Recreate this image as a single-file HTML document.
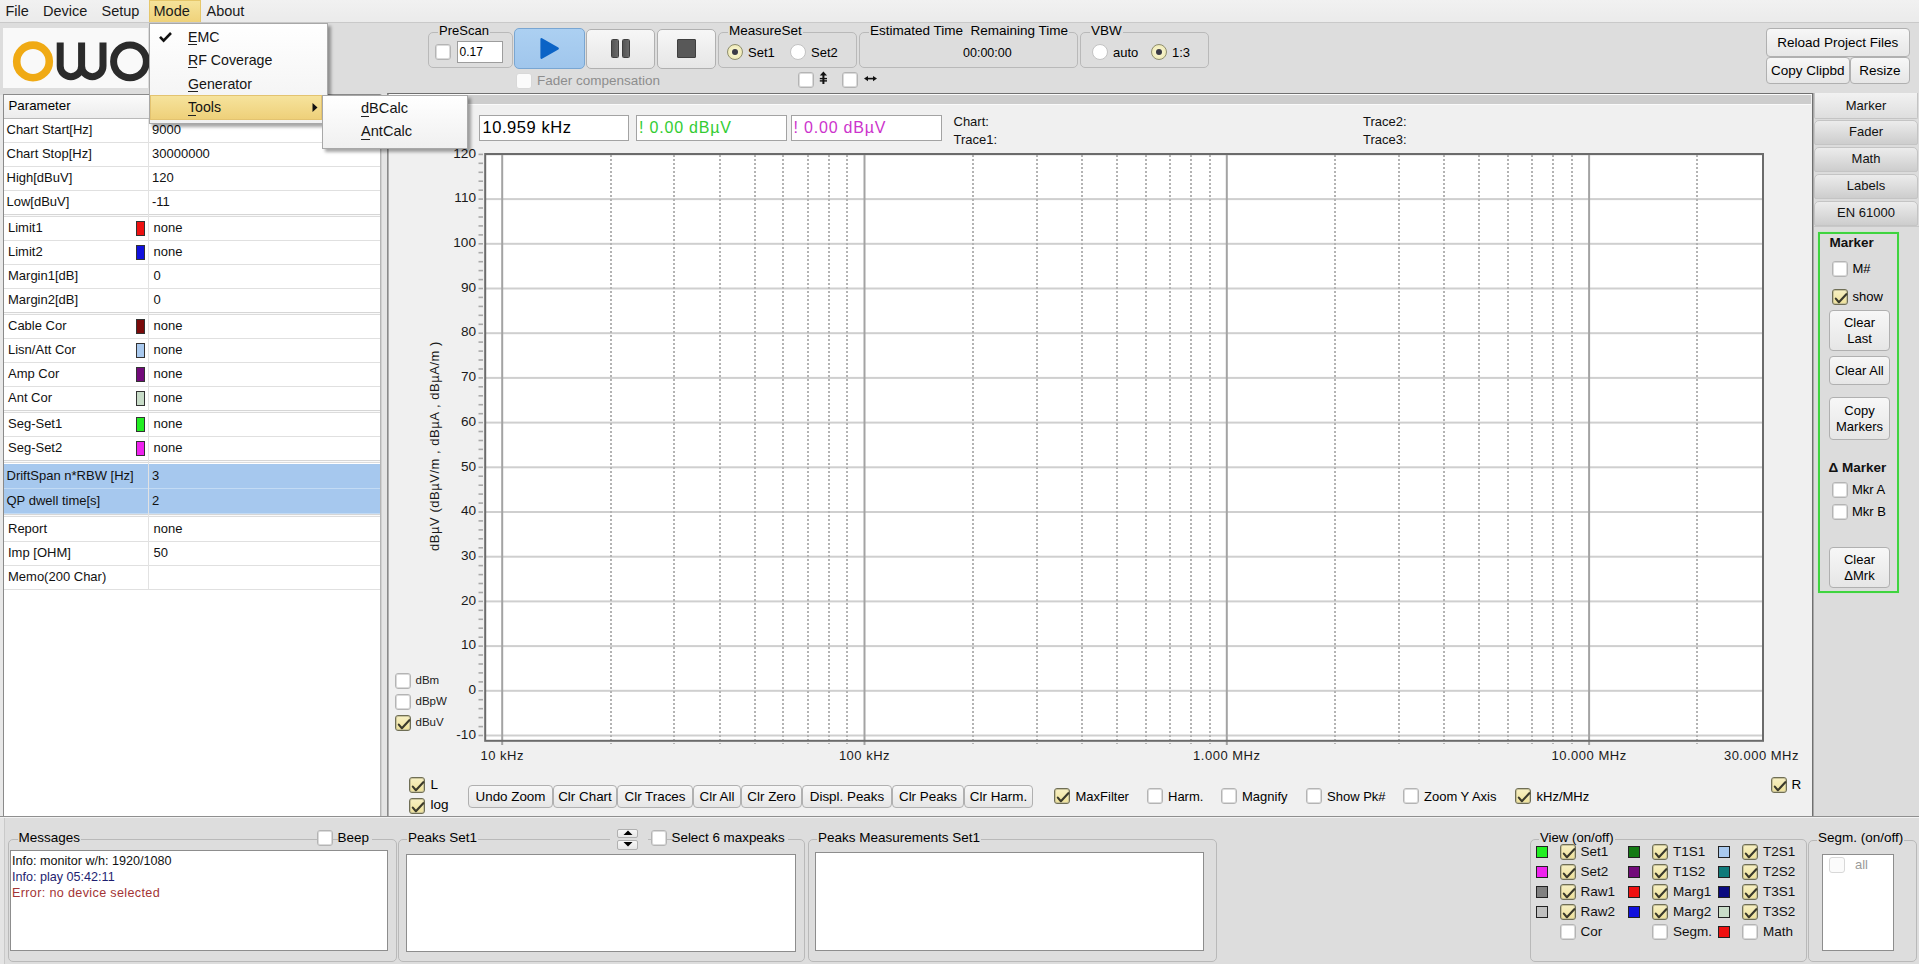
<!DOCTYPE html><html><head><meta charset="utf-8"><style>
*{margin:0;padding:0;box-sizing:border-box}
html,body{width:1919px;height:964px;overflow:hidden;background:#dddddd;font-family:"Liberation Sans", sans-serif}
.t{position:absolute;white-space:pre;font-family:"Liberation Sans", sans-serif}
.b{position:absolute}
.cb{position:absolute;border:1px solid #b4b4b4;border-radius:3px;background:#fff;box-shadow:0 0 0 1px #dadada inset}
.cb.on{border:1px solid #6f6e55;background:linear-gradient(#f7f0c4,#efe29a);box-shadow:0 0 0 1px #c9c39a inset;width:16px;height:16px}
.cb.dis{border-color:#d8d8d8;box-shadow:none;background:#fbfbfb}
.rd{position:absolute;width:16px;height:16px;border-radius:50%;border:1px solid #c3c3c3;background:#fff}
.rd.on{border:1px solid #8f8e6e;background:radial-gradient(circle,#f6f2c8 40%,#e8e2a8 100%)}
.rd .dot{position:absolute;left:4px;top:4px;width:6px;height:6px;border-radius:50%;background:#3a3a46}
.btn{position:absolute;border:1px solid #b0b0b0;border-radius:4px;background:linear-gradient(#f7f7f7,#e6e6e6)}
.grp{position:absolute;border:1px solid #b9b9b9;border-radius:5px}
</style></head><body>
<div class="b" style="left:0px;top:0px;width:1919px;height:23px;background:linear-gradient(#f1f1f1,#ebebeb);border-bottom:1px solid #c9c9c9"></div>
<div class="b" style="left:149px;top:0px;width:52px;height:22px;background:linear-gradient(#f6e39a,#efd27a);border:1px solid #e6c76a;border-bottom:none"></div>
<div class="t" style="left:5.5px;top:3.8px;font-size:14.5px;line-height:14.5px;color:#1a1a1a;">File</div>
<div class="t" style="left:43px;top:3.8px;font-size:14.5px;line-height:14.5px;color:#1a1a1a;">Device</div>
<div class="t" style="left:101.5px;top:3.8px;font-size:14.5px;line-height:14.5px;color:#1a1a1a;">Setup</div>
<div class="t" style="left:153.5px;top:3.8px;font-size:14.5px;line-height:14.5px;color:#1a1a1a;">Mode</div>
<div class="t" style="left:206.5px;top:3.8px;font-size:14.5px;line-height:14.5px;color:#1a1a1a;">About</div>
<div class="b" style="left:0px;top:23px;width:1919px;height:70px;background:#dddddd"></div>
<div class="b" style="left:3px;top:28px;width:145px;height:60px;background:#f9f9f9"></div>
<svg class="b" style="left:0;top:22px" width="160" height="70">
<circle cx="33" cy="39.4" r="16.3" stroke="#f0aa14" stroke-width="7.6" fill="none"/>
<path d="M60.2 20.4 V44 a10.7 10.7 0 0 0 21.4 0 V20.4 M81.6 44 a10.7 10.7 0 0 0 21.4 0 V20.4" stroke="#2b2b2b" stroke-width="7" fill="none"/>
<circle cx="130" cy="39.4" r="16.4" stroke="#2b2b2b" stroke-width="7" fill="none"/>
</svg>
<div class="grp" style="left:428px;top:32px;width:85px;height:36px"></div>
<div class="t" style="left:439px;top:24.0px;font-size:13px;line-height:13px;color:#000;background:#dddddd;padding:0 1px;margin-left:-1px;">PreScan</div>
<div class="cb" style="left:435px;top:44px;width:16px;height:16px"></div>
<div class="b" style="left:457px;top:41px;width:46px;height:22px;background:#fff;border:1px solid #9d9d9d"></div>
<div class="t" style="left:459.5px;top:46.0px;font-size:12px;line-height:12px;color:#000;">0.17</div>
<div class="b" style="left:514px;top:28px;width:71px;height:41px;border:1px solid #79a6d2;border-radius:5px;background:linear-gradient(#acd0f2,#a0c6ec)"></div>
<svg class="b" style="left:514px;top:28px" width="71" height="41"><path d="M27.5 11.2 L43.8 20.5 L27.5 29.8 Z" fill="#0b63c6" stroke="#0b63c6" stroke-width="2.2" stroke-linejoin="round"/></svg>
<div class="btn" style="left:586px;top:28.5px;width:69px;height:40px;border-radius:5px"></div>
<div class="b" style="left:611px;top:39px;width:7.5px;height:18.5px;background:linear-gradient(90deg,#555,#6a6a6a);border-radius:1.5px;border:1px solid #3f3f3f"></div>
<div class="b" style="left:622px;top:39px;width:8px;height:18.5px;background:linear-gradient(90deg,#555,#6a6a6a);border-radius:1.5px;border:1px solid #3f3f3f"></div>
<div class="btn" style="left:657px;top:28.5px;width:59px;height:40px;border-radius:5px"></div>
<div class="b" style="left:677px;top:39px;width:19px;height:18.5px;background:#585858;border:1px solid #3f3f3f;border-radius:1px"></div>
<div class="cb dis" style="left:516px;top:73px;width:16px;height:16px"></div>
<div class="t" style="left:537px;top:73.8px;font-size:13.5px;line-height:13.5px;color:#8d8d8d;">Fader compensation</div>
<div class="grp" style="left:718px;top:32px;width:139px;height:36px"></div>
<div class="t" style="left:729px;top:23.8px;font-size:13.5px;line-height:13.5px;color:#000;background:#dddddd;padding:0 1px;margin-left:-1px;">MeasureSet</div>
<div class="rd on" style="left:727px;top:44px"><div class="dot"></div></div>
<div class="t" style="left:748px;top:45.5px;font-size:13px;line-height:13px;color:#000;">Set1</div>
<div class="rd" style="left:790px;top:44px"></div>
<div class="t" style="left:811px;top:45.5px;font-size:13px;line-height:13px;color:#000;">Set2</div>
<div class="cb" style="left:797.5px;top:71.5px;width:16px;height:16px"></div>
<svg class="b" style="left:0;top:0" width="900" height="95"><path d="M823.4 71.6 L827 75.6 H819.8 Z" fill="#111"/><rect x="822.4" y="75" width="2" height="9" fill="#111"/><rect x="819.8" y="77.9" width="7.2" height="1.4" fill="#111"/><rect x="819.8" y="80.2" width="7.2" height="1.4" fill="#111"/></svg>
<div class="cb" style="left:842px;top:71.5px;width:16px;height:16px"></div>
<svg class="b" style="left:0;top:0" width="900" height="95"><path d="M864 78.6 L868 75.9 V81.3 Z M877 78.6 L873 75.9 V81.3 Z" fill="#111"/><rect x="867" y="77.8" width="7" height="1.6" fill="#111"/></svg>
<div class="grp" style="left:859px;top:32px;width:219px;height:36px"></div>
<div class="t" style="left:870px;top:23.8px;font-size:13.5px;line-height:13.5px;color:#000;background:#dddddd;padding:0 1px;margin-left:-1px;">Estimated Time  Remaining Time</div>
<div class="t" style="left:963px;top:46.8px;font-size:12.5px;line-height:12.5px;color:#000;">00:00:00</div>
<div class="grp" style="left:1080px;top:32px;width:129px;height:36px"></div>
<div class="t" style="left:1091px;top:23.8px;font-size:13.5px;line-height:13.5px;color:#000;background:#dddddd;padding:0 1px;margin-left:-1px;">VBW</div>
<div class="rd" style="left:1092px;top:44px"></div>
<div class="t" style="left:1113px;top:46.0px;font-size:13px;line-height:13px;color:#000;">auto</div>
<div class="rd on" style="left:1151px;top:44px"><div class="dot"></div></div>
<div class="t" style="left:1172px;top:46.0px;font-size:13px;line-height:13px;color:#000;">1:3</div>
<div class="btn" style="left:1765.5px;top:27.5px;width:144.5px;height:29.5px;"></div>
<div class="t" style="left:1537.75px;width:600px;text-align:center;top:35.5px;font-size:13.5px;line-height:13.5px;color:#000;">Reload Project Files</div>
<div class="btn" style="left:1765.5px;top:57px;width:84.5px;height:27px;"></div>
<div class="t" style="left:1507.75px;width:600px;text-align:center;top:63.8px;font-size:13.5px;line-height:13.5px;color:#000;">Copy Clipbd</div>
<div class="btn" style="left:1850px;top:57px;width:60px;height:27px;"></div>
<div class="t" style="left:1580.0px;width:600px;text-align:center;top:63.8px;font-size:13.5px;line-height:13.5px;color:#000;">Resize</div>
<div class="b" style="left:0px;top:95px;width:388px;height:723px;background:#e8e8e8"></div>
<div class="b" style="left:3px;top:94px;width:378px;height:723px;background:#fff;border:1px solid #8a8a8a;border-right:1px solid #b5b5b5"></div>
<div class="b" style="left:381px;top:94px;width:7px;height:723px;background:#e4e4e4;border-left:1px solid #d0d0d0"></div>
<div class="b" style="left:4px;top:95px;width:376px;height:24px;background:linear-gradient(#fbfbfb,#ececec);border-bottom:1px solid #b9b9b9"></div>
<div class="t" style="left:8.5px;top:98.5px;font-size:13.3px;line-height:13.3px;color:#000;">Parameter</div>
<div class="b" style="left:4px;top:118px;width:376px;height:25px;border-bottom:1px solid #e0e0e0"></div>
<div class="t" style="left:6.5px;top:122.5px;font-size:13px;line-height:13px;color:#111;">Chart Start[Hz]</div>
<div class="t" style="left:152px;top:122.5px;font-size:13px;line-height:13px;color:#111;">9000</div>
<div class="b" style="left:4px;top:142px;width:376px;height:25px;border-bottom:1px solid #e0e0e0"></div>
<div class="t" style="left:6.5px;top:146.5px;font-size:13px;line-height:13px;color:#111;">Chart Stop[Hz]</div>
<div class="t" style="left:152px;top:146.5px;font-size:13px;line-height:13px;color:#111;">30000000</div>
<div class="b" style="left:4px;top:166px;width:376px;height:25px;border-bottom:1px solid #e0e0e0"></div>
<div class="t" style="left:6.5px;top:170.5px;font-size:13px;line-height:13px;color:#111;">High[dBuV]</div>
<div class="t" style="left:152px;top:170.5px;font-size:13px;line-height:13px;color:#111;">120</div>
<div class="b" style="left:4px;top:190px;width:376px;height:25px;border-bottom:1px solid #e0e0e0"></div>
<div class="t" style="left:6.5px;top:194.5px;font-size:13px;line-height:13px;color:#111;">Low[dBuV]</div>
<div class="t" style="left:152px;top:194.5px;font-size:13px;line-height:13px;color:#111;">-11</div>
<div class="b" style="left:4px;top:214px;width:376px;height:3px;background:#fafafa;border-top:1px solid #d6d6d6;border-bottom:1px solid #dcdcdc"></div>
<div class="b" style="left:4px;top:216px;width:376px;height:25px;border-bottom:1px solid #e0e0e0"></div>
<div class="t" style="left:8px;top:220.5px;font-size:13px;line-height:13px;color:#111;">Limit1</div>
<div class="b" style="left:136px;top:221px;width:9px;height:15px;background:#ee1111;border:1px solid #333"></div>
<div class="t" style="left:153.5px;top:220.5px;font-size:13px;line-height:13px;color:#111;">none</div>
<div class="b" style="left:4px;top:240px;width:376px;height:25px;border-bottom:1px solid #e0e0e0"></div>
<div class="t" style="left:8px;top:244.5px;font-size:13px;line-height:13px;color:#111;">Limit2</div>
<div class="b" style="left:136px;top:245px;width:9px;height:15px;background:#1111dd;border:1px solid #333"></div>
<div class="t" style="left:153.5px;top:244.5px;font-size:13px;line-height:13px;color:#111;">none</div>
<div class="b" style="left:4px;top:264px;width:376px;height:25px;border-bottom:1px solid #e0e0e0"></div>
<div class="t" style="left:8px;top:268.5px;font-size:13px;line-height:13px;color:#111;">Margin1[dB]</div>
<div class="t" style="left:153.5px;top:268.5px;font-size:13px;line-height:13px;color:#111;">0</div>
<div class="b" style="left:4px;top:288px;width:376px;height:25px;border-bottom:1px solid #e0e0e0"></div>
<div class="t" style="left:8px;top:292.5px;font-size:13px;line-height:13px;color:#111;">Margin2[dB]</div>
<div class="t" style="left:153.5px;top:292.5px;font-size:13px;line-height:13px;color:#111;">0</div>
<div class="b" style="left:4px;top:312px;width:376px;height:3px;background:#fafafa;border-top:1px solid #d6d6d6;border-bottom:1px solid #dcdcdc"></div>
<div class="b" style="left:4px;top:314px;width:376px;height:25px;border-bottom:1px solid #e0e0e0"></div>
<div class="t" style="left:8px;top:318.5px;font-size:13px;line-height:13px;color:#111;">Cable Cor</div>
<div class="b" style="left:136px;top:319px;width:9px;height:15px;background:#7a0a0a;border:1px solid #333"></div>
<div class="t" style="left:153.5px;top:318.5px;font-size:13px;line-height:13px;color:#111;">none</div>
<div class="b" style="left:4px;top:338px;width:376px;height:25px;border-bottom:1px solid #e0e0e0"></div>
<div class="t" style="left:8px;top:342.5px;font-size:13px;line-height:13px;color:#111;">Lisn/Att Cor</div>
<div class="b" style="left:136px;top:343px;width:9px;height:15px;background:#a9c9ee;border:1px solid #333"></div>
<div class="t" style="left:153.5px;top:342.5px;font-size:13px;line-height:13px;color:#111;">none</div>
<div class="b" style="left:4px;top:362px;width:376px;height:25px;border-bottom:1px solid #e0e0e0"></div>
<div class="t" style="left:8px;top:366.5px;font-size:13px;line-height:13px;color:#111;">Amp Cor</div>
<div class="b" style="left:136px;top:367px;width:9px;height:15px;background:#720a7a;border:1px solid #333"></div>
<div class="t" style="left:153.5px;top:366.5px;font-size:13px;line-height:13px;color:#111;">none</div>
<div class="b" style="left:4px;top:386px;width:376px;height:25px;border-bottom:1px solid #e0e0e0"></div>
<div class="t" style="left:8px;top:390.5px;font-size:13px;line-height:13px;color:#111;">Ant Cor</div>
<div class="b" style="left:136px;top:391px;width:9px;height:15px;background:#c8dcc8;border:1px solid #333"></div>
<div class="t" style="left:153.5px;top:390.5px;font-size:13px;line-height:13px;color:#111;">none</div>
<div class="b" style="left:4px;top:410px;width:376px;height:3px;background:#fafafa;border-top:1px solid #d6d6d6;border-bottom:1px solid #dcdcdc"></div>
<div class="b" style="left:4px;top:412px;width:376px;height:25px;border-bottom:1px solid #e0e0e0"></div>
<div class="t" style="left:8px;top:416.5px;font-size:13px;line-height:13px;color:#111;">Seg-Set1</div>
<div class="b" style="left:136px;top:417px;width:9px;height:15px;background:#22ee22;border:1px solid #333"></div>
<div class="t" style="left:153.5px;top:416.5px;font-size:13px;line-height:13px;color:#111;">none</div>
<div class="b" style="left:4px;top:436px;width:376px;height:25px;border-bottom:1px solid #e0e0e0"></div>
<div class="t" style="left:8px;top:440.5px;font-size:13px;line-height:13px;color:#111;">Seg-Set2</div>
<div class="b" style="left:136px;top:441px;width:9px;height:15px;background:#ee22ee;border:1px solid #333"></div>
<div class="t" style="left:153.5px;top:440.5px;font-size:13px;line-height:13px;color:#111;">none</div>
<div class="b" style="left:4px;top:460px;width:376px;height:3px;background:#fafafa;border-top:1px solid #d6d6d6;border-bottom:1px solid #dcdcdc"></div>
<div class="b" style="left:4px;top:464px;width:376px;height:25px;background:#a6c8ee;border-bottom:1px solid #c3dbf4"></div>
<div class="t" style="left:6.5px;top:468.5px;font-size:13px;line-height:13px;color:#111;">DriftSpan n*RBW [Hz]</div>
<div class="t" style="left:152px;top:468.5px;font-size:13px;line-height:13px;color:#111;">3</div>
<div class="b" style="left:4px;top:489px;width:376px;height:25px;background:#a6c8ee;border-bottom:1px solid #c3dbf4"></div>
<div class="t" style="left:6.5px;top:493.5px;font-size:13px;line-height:13px;color:#111;">QP dwell time[s]</div>
<div class="t" style="left:152px;top:493.5px;font-size:13px;line-height:13px;color:#111;">2</div>
<div class="b" style="left:4px;top:514px;width:376px;height:3px;background:#fafafa;border-top:1px solid #d6d6d6;border-bottom:1px solid #dcdcdc"></div>
<div class="b" style="left:4px;top:517px;width:376px;height:25px;border-bottom:1px solid #e0e0e0"></div>
<div class="t" style="left:8px;top:521.5px;font-size:13px;line-height:13px;color:#111;">Report</div>
<div class="t" style="left:153.5px;top:521.5px;font-size:13px;line-height:13px;color:#111;">none</div>
<div class="b" style="left:4px;top:541px;width:376px;height:25px;border-bottom:1px solid #e0e0e0"></div>
<div class="t" style="left:8px;top:545.5px;font-size:13px;line-height:13px;color:#111;">Imp [OHM]</div>
<div class="t" style="left:153.5px;top:545.5px;font-size:13px;line-height:13px;color:#111;">50</div>
<div class="b" style="left:4px;top:565px;width:376px;height:25px;border-bottom:1px solid #e0e0e0"></div>
<div class="t" style="left:8px;top:569.5px;font-size:13px;line-height:13px;color:#111;">Memo(200 Char)</div>
<div class="b" style="left:148px;top:119px;width:1px;height:470px;background:#e2e2e2"></div>
<div class="b" style="left:387px;top:93px;width:1426px;height:724px;background:#f0f0f0;border-left:1px solid #8a8a8a;border-top:1px solid #707070;border-bottom:1px solid #9a9a9a;border-right:1px solid #707070"></div>
<div class="b" style="left:388px;top:94px;width:1424px;height:1px;background:#fbfbfb"></div>
<div class="b" style="left:388px;top:94px;width:1px;height:722px;background:#b0b0b0"></div>
<div class="b" style="left:389px;top:95px;width:1422px;height:10px;background:#cdcdcd;border-bottom:1px solid #fafafa"></div>
<div class="b" style="left:479px;top:115px;width:150px;height:26px;background:#fff;border:1px solid #a3a3a3"></div>
<div class="t" style="left:482.5px;top:119.2px;font-size:16.5px;line-height:16.5px;color:#000;letter-spacing:0.55px;">10.959 kHz</div>
<div class="b" style="left:636px;top:115px;width:151px;height:26px;background:#fff;border:1px solid #a3a3a3"></div>
<div class="t" style="left:639px;top:119.5px;font-size:16px;line-height:16px;color:#33cc33;letter-spacing:0.8px;">! 0.00 dBµV</div>
<div class="b" style="left:791px;top:115px;width:151px;height:26px;background:#fff;border:1px solid #a3a3a3"></div>
<div class="t" style="left:793.5px;top:119.5px;font-size:16px;line-height:16px;color:#cc33cc;letter-spacing:0.8px;">! 0.00 dBµV</div>
<div class="t" style="left:953.5px;top:114.5px;font-size:13px;line-height:13px;color:#111;">Chart:</div>
<div class="t" style="left:953.5px;top:132.5px;font-size:13px;line-height:13px;color:#111;">Trace1:</div>
<div class="t" style="left:1363px;top:114.5px;font-size:13px;line-height:13px;color:#111;">Trace2:</div>
<div class="t" style="left:1363px;top:132.5px;font-size:13px;line-height:13px;color:#111;">Trace3:</div>
<svg class="b" style="left:0;top:0" width="1919" height="964"><defs><pattern id="dots" x="0" y="155" width="4" height="4" patternUnits="userSpaceOnUse"><rect x="0" y="0" width="4" height="2" fill="#b3b3b3"/></pattern></defs><rect x="485" y="153" width="1278" height="588" fill="#fff"/><rect x="485" y="734.5" width="1278" height="2" fill="#cfcfcf"/><rect x="485" y="689.8" width="1278" height="2" fill="#cfcfcf"/><rect x="485" y="645.1" width="1278" height="2" fill="#cfcfcf"/><rect x="485" y="600.4" width="1278" height="2" fill="#cfcfcf"/><rect x="485" y="555.7" width="1278" height="2" fill="#cfcfcf"/><rect x="485" y="511.0" width="1278" height="2" fill="#cfcfcf"/><rect x="485" y="466.3" width="1278" height="2" fill="#cfcfcf"/><rect x="485" y="421.6" width="1278" height="2" fill="#cfcfcf"/><rect x="485" y="376.9" width="1278" height="2" fill="#cfcfcf"/><rect x="485" y="332.2" width="1278" height="2" fill="#cfcfcf"/><rect x="485" y="287.5" width="1278" height="2" fill="#cfcfcf"/><rect x="485" y="242.8" width="1278" height="2" fill="#cfcfcf"/><rect x="485" y="198.1" width="1278" height="2" fill="#cfcfcf"/><rect x="485" y="153.4" width="1278" height="2" fill="#cfcfcf"/><rect x="610" y="155" width="2" height="589" fill="url(#dots)"/><rect x="673" y="155" width="2" height="589" fill="url(#dots)"/><rect x="719" y="155" width="2" height="589" fill="url(#dots)"/><rect x="754" y="155" width="2" height="589" fill="url(#dots)"/><rect x="782" y="155" width="2" height="589" fill="url(#dots)"/><rect x="807" y="155" width="2" height="589" fill="url(#dots)"/><rect x="828" y="155" width="2" height="589" fill="url(#dots)"/><rect x="846" y="155" width="2" height="589" fill="url(#dots)"/><rect x="972" y="155" width="2" height="589" fill="url(#dots)"/><rect x="1036" y="155" width="2" height="589" fill="url(#dots)"/><rect x="1081" y="155" width="2" height="589" fill="url(#dots)"/><rect x="1116" y="155" width="2" height="589" fill="url(#dots)"/><rect x="1145" y="155" width="2" height="589" fill="url(#dots)"/><rect x="1169" y="155" width="2" height="589" fill="url(#dots)"/><rect x="1190" y="155" width="2" height="589" fill="url(#dots)"/><rect x="1209" y="155" width="2" height="589" fill="url(#dots)"/><rect x="1334" y="155" width="2" height="589" fill="url(#dots)"/><rect x="1398" y="155" width="2" height="589" fill="url(#dots)"/><rect x="1443" y="155" width="2" height="589" fill="url(#dots)"/><rect x="1478" y="155" width="2" height="589" fill="url(#dots)"/><rect x="1507" y="155" width="2" height="589" fill="url(#dots)"/><rect x="1531" y="155" width="2" height="589" fill="url(#dots)"/><rect x="1552" y="155" width="2" height="589" fill="url(#dots)"/><rect x="1571" y="155" width="2" height="589" fill="url(#dots)"/><rect x="1696" y="155" width="2" height="589" fill="url(#dots)"/><rect x="501.2" y="153" width="2" height="592" fill="#a3a3a3"/><rect x="863.5" y="153" width="2" height="592" fill="#a3a3a3"/><rect x="1225.8" y="153" width="2" height="592" fill="#a3a3a3"/><rect x="1588.1" y="153" width="2" height="592" fill="#a3a3a3"/><rect x="478.5" y="734.7" width="4.5" height="1.6" fill="#a9a9a9"/><rect x="478.5" y="725.8" width="4.5" height="1.6" fill="#a9a9a9"/><rect x="478.5" y="716.8" width="4.5" height="1.6" fill="#a9a9a9"/><rect x="478.5" y="707.9" width="4.5" height="1.6" fill="#a9a9a9"/><rect x="478.5" y="698.9" width="4.5" height="1.6" fill="#a9a9a9"/><rect x="478.5" y="690.0" width="4.5" height="1.6" fill="#a9a9a9"/><rect x="478.5" y="681.1" width="4.5" height="1.6" fill="#a9a9a9"/><rect x="478.5" y="672.1" width="4.5" height="1.6" fill="#a9a9a9"/><rect x="478.5" y="663.2" width="4.5" height="1.6" fill="#a9a9a9"/><rect x="478.5" y="654.2" width="4.5" height="1.6" fill="#a9a9a9"/><rect x="478.5" y="645.3" width="4.5" height="1.6" fill="#a9a9a9"/><rect x="478.5" y="636.4" width="4.5" height="1.6" fill="#a9a9a9"/><rect x="478.5" y="627.4" width="4.5" height="1.6" fill="#a9a9a9"/><rect x="478.5" y="618.5" width="4.5" height="1.6" fill="#a9a9a9"/><rect x="478.5" y="609.5" width="4.5" height="1.6" fill="#a9a9a9"/><rect x="478.5" y="600.6" width="4.5" height="1.6" fill="#a9a9a9"/><rect x="478.5" y="591.7" width="4.5" height="1.6" fill="#a9a9a9"/><rect x="478.5" y="582.7" width="4.5" height="1.6" fill="#a9a9a9"/><rect x="478.5" y="573.8" width="4.5" height="1.6" fill="#a9a9a9"/><rect x="478.5" y="564.8" width="4.5" height="1.6" fill="#a9a9a9"/><rect x="478.5" y="555.9" width="4.5" height="1.6" fill="#a9a9a9"/><rect x="478.5" y="547.0" width="4.5" height="1.6" fill="#a9a9a9"/><rect x="478.5" y="538.0" width="4.5" height="1.6" fill="#a9a9a9"/><rect x="478.5" y="529.1" width="4.5" height="1.6" fill="#a9a9a9"/><rect x="478.5" y="520.1" width="4.5" height="1.6" fill="#a9a9a9"/><rect x="478.5" y="511.2" width="4.5" height="1.6" fill="#a9a9a9"/><rect x="478.5" y="502.3" width="4.5" height="1.6" fill="#a9a9a9"/><rect x="478.5" y="493.3" width="4.5" height="1.6" fill="#a9a9a9"/><rect x="478.5" y="484.4" width="4.5" height="1.6" fill="#a9a9a9"/><rect x="478.5" y="475.4" width="4.5" height="1.6" fill="#a9a9a9"/><rect x="478.5" y="466.5" width="4.5" height="1.6" fill="#a9a9a9"/><rect x="478.5" y="457.6" width="4.5" height="1.6" fill="#a9a9a9"/><rect x="478.5" y="448.6" width="4.5" height="1.6" fill="#a9a9a9"/><rect x="478.5" y="439.7" width="4.5" height="1.6" fill="#a9a9a9"/><rect x="478.5" y="430.7" width="4.5" height="1.6" fill="#a9a9a9"/><rect x="478.5" y="421.8" width="4.5" height="1.6" fill="#a9a9a9"/><rect x="478.5" y="412.9" width="4.5" height="1.6" fill="#a9a9a9"/><rect x="478.5" y="403.9" width="4.5" height="1.6" fill="#a9a9a9"/><rect x="478.5" y="395.0" width="4.5" height="1.6" fill="#a9a9a9"/><rect x="478.5" y="386.0" width="4.5" height="1.6" fill="#a9a9a9"/><rect x="478.5" y="377.1" width="4.5" height="1.6" fill="#a9a9a9"/><rect x="478.5" y="368.2" width="4.5" height="1.6" fill="#a9a9a9"/><rect x="478.5" y="359.2" width="4.5" height="1.6" fill="#a9a9a9"/><rect x="478.5" y="350.3" width="4.5" height="1.6" fill="#a9a9a9"/><rect x="478.5" y="341.3" width="4.5" height="1.6" fill="#a9a9a9"/><rect x="478.5" y="332.4" width="4.5" height="1.6" fill="#a9a9a9"/><rect x="478.5" y="323.5" width="4.5" height="1.6" fill="#a9a9a9"/><rect x="478.5" y="314.5" width="4.5" height="1.6" fill="#a9a9a9"/><rect x="478.5" y="305.6" width="4.5" height="1.6" fill="#a9a9a9"/><rect x="478.5" y="296.6" width="4.5" height="1.6" fill="#a9a9a9"/><rect x="478.5" y="287.7" width="4.5" height="1.6" fill="#a9a9a9"/><rect x="478.5" y="278.8" width="4.5" height="1.6" fill="#a9a9a9"/><rect x="478.5" y="269.8" width="4.5" height="1.6" fill="#a9a9a9"/><rect x="478.5" y="260.9" width="4.5" height="1.6" fill="#a9a9a9"/><rect x="478.5" y="251.9" width="4.5" height="1.6" fill="#a9a9a9"/><rect x="478.5" y="243.0" width="4.5" height="1.6" fill="#a9a9a9"/><rect x="478.5" y="234.1" width="4.5" height="1.6" fill="#a9a9a9"/><rect x="478.5" y="225.1" width="4.5" height="1.6" fill="#a9a9a9"/><rect x="478.5" y="216.2" width="4.5" height="1.6" fill="#a9a9a9"/><rect x="478.5" y="207.2" width="4.5" height="1.6" fill="#a9a9a9"/><rect x="478.5" y="198.3" width="4.5" height="1.6" fill="#a9a9a9"/><rect x="478.5" y="189.4" width="4.5" height="1.6" fill="#a9a9a9"/><rect x="478.5" y="180.4" width="4.5" height="1.6" fill="#a9a9a9"/><rect x="478.5" y="171.5" width="4.5" height="1.6" fill="#a9a9a9"/><rect x="478.5" y="162.5" width="4.5" height="1.6" fill="#a9a9a9"/><rect x="478.5" y="153.6" width="4.5" height="1.6" fill="#a9a9a9"/><rect x="485.2" y="154" width="1277.8" height="586.8" fill="none" stroke="#6b6b6b" stroke-width="2"/></svg>
<div class="t" style="right:1443px;top:727.7px;font-size:13.6px;line-height:13.6px;color:#1a1a1a;">-10</div>
<div class="t" style="right:1443px;top:683.0px;font-size:13.6px;line-height:13.6px;color:#1a1a1a;">0</div>
<div class="t" style="right:1443px;top:638.3px;font-size:13.6px;line-height:13.6px;color:#1a1a1a;">10</div>
<div class="t" style="right:1443px;top:593.6px;font-size:13.6px;line-height:13.6px;color:#1a1a1a;">20</div>
<div class="t" style="right:1443px;top:548.9px;font-size:13.6px;line-height:13.6px;color:#1a1a1a;">30</div>
<div class="t" style="right:1443px;top:504.2px;font-size:13.6px;line-height:13.6px;color:#1a1a1a;">40</div>
<div class="t" style="right:1443px;top:459.5px;font-size:13.6px;line-height:13.6px;color:#1a1a1a;">50</div>
<div class="t" style="right:1443px;top:414.8px;font-size:13.6px;line-height:13.6px;color:#1a1a1a;">60</div>
<div class="t" style="right:1443px;top:370.1px;font-size:13.6px;line-height:13.6px;color:#1a1a1a;">70</div>
<div class="t" style="right:1443px;top:325.4px;font-size:13.6px;line-height:13.6px;color:#1a1a1a;">80</div>
<div class="t" style="right:1443px;top:280.7px;font-size:13.6px;line-height:13.6px;color:#1a1a1a;">90</div>
<div class="t" style="right:1443px;top:236.0px;font-size:13.6px;line-height:13.6px;color:#1a1a1a;">100</div>
<div class="t" style="right:1443px;top:191.3px;font-size:13.6px;line-height:13.6px;color:#1a1a1a;">110</div>
<div class="t" style="right:1443px;top:146.6px;font-size:13.6px;line-height:13.6px;color:#1a1a1a;">120</div>
<div class="t" style="left:202.2px;width:600px;text-align:center;top:749.0px;font-size:13px;line-height:13px;color:#1a1a1a;letter-spacing:0.5px;">10 kHz</div>
<div class="t" style="left:564.5px;width:600px;text-align:center;top:749.0px;font-size:13px;line-height:13px;color:#1a1a1a;letter-spacing:0.5px;">100 kHz</div>
<div class="t" style="left:926.8px;width:600px;text-align:center;top:749.0px;font-size:13px;line-height:13px;color:#1a1a1a;letter-spacing:0.5px;">1.000 MHz</div>
<div class="t" style="left:1289.1000000000001px;width:600px;text-align:center;top:749.0px;font-size:13px;line-height:13px;color:#1a1a1a;letter-spacing:0.5px;">10.000 MHz</div>
<div class="t" style="left:1461.461030584934px;width:600px;text-align:center;top:749.0px;font-size:13px;line-height:13px;color:#1a1a1a;letter-spacing:0.5px;">30.000 MHz</div>
<div class="t" style="left:285px;top:439px;width:300px;text-align:center;font-size:13px;line-height:14px;letter-spacing:0.53px;color:#1a1a1a;transform:rotate(-90deg)">dBµV (dBµV/m , dBµA , dBµA/m )</div>
<div class="cb" style="left:394.5px;top:673px;width:16px;height:16px"></div>
<div class="t" style="left:415.5px;top:675.2px;font-size:11.5px;line-height:11.5px;color:#222;">dBm</div>
<div class="cb" style="left:394.5px;top:693.5px;width:16px;height:16px"></div>
<div class="t" style="left:415.5px;top:695.8px;font-size:11.5px;line-height:11.5px;color:#222;">dBpW</div>
<div class="cb on" style="left:394.5px;top:714.5px;width:16px;height:16px"><svg width="16" height="16" style="position:absolute;left:0;top:0"><path d="M2.8 8.6 L5.9 12.2 L13.3 4.2" stroke="#3b3a2c" stroke-width="2.1" fill="none" stroke-linejoin="round" stroke-linecap="round"/></svg></div>
<div class="t" style="left:415.5px;top:716.8px;font-size:11.5px;line-height:11.5px;color:#222;">dBuV</div>
<div class="cb on" style="left:409.3px;top:776.5px;width:16px;height:16px"><svg width="16" height="16" style="position:absolute;left:0;top:0"><path d="M2.8 8.6 L5.9 12.2 L13.3 4.2" stroke="#3b3a2c" stroke-width="2.1" fill="none" stroke-linejoin="round" stroke-linecap="round"/></svg></div>
<div class="t" style="left:430.4px;top:777.8px;font-size:13.5px;line-height:13.5px;color:#000;">L</div>
<div class="cb on" style="left:409.3px;top:797.5px;width:16px;height:16px"><svg width="16" height="16" style="position:absolute;left:0;top:0"><path d="M2.8 8.6 L5.9 12.2 L13.3 4.2" stroke="#3b3a2c" stroke-width="2.1" fill="none" stroke-linejoin="round" stroke-linecap="round"/></svg></div>
<div class="t" style="left:430.4px;top:798.2px;font-size:13.5px;line-height:13.5px;color:#000;">log</div>
<div class="btn" style="left:468px;top:784.5px;width:85px;height:23.5px;"></div>
<div class="t" style="left:210.5px;width:600px;text-align:center;top:789.5px;font-size:13.4px;line-height:13.4px;color:#000;">Undo Zoom</div>
<div class="btn" style="left:553px;top:784.5px;width:64px;height:23.5px;"></div>
<div class="t" style="left:285.0px;width:600px;text-align:center;top:789.5px;font-size:13.4px;line-height:13.4px;color:#000;">Clr Chart</div>
<div class="btn" style="left:617px;top:784.5px;width:76px;height:23.5px;"></div>
<div class="t" style="left:355.0px;width:600px;text-align:center;top:789.5px;font-size:13.4px;line-height:13.4px;color:#000;">Clr Traces</div>
<div class="btn" style="left:693px;top:784.5px;width:48px;height:23.5px;"></div>
<div class="t" style="left:417.0px;width:600px;text-align:center;top:789.5px;font-size:13.4px;line-height:13.4px;color:#000;">Clr All</div>
<div class="btn" style="left:741px;top:784.5px;width:61px;height:23.5px;"></div>
<div class="t" style="left:471.5px;width:600px;text-align:center;top:789.5px;font-size:13.4px;line-height:13.4px;color:#000;">Clr Zero</div>
<div class="btn" style="left:802px;top:784.5px;width:90px;height:23.5px;"></div>
<div class="t" style="left:547.0px;width:600px;text-align:center;top:789.5px;font-size:13.4px;line-height:13.4px;color:#000;">Displ. Peaks</div>
<div class="btn" style="left:892px;top:784.5px;width:72px;height:23.5px;"></div>
<div class="t" style="left:628.0px;width:600px;text-align:center;top:789.5px;font-size:13.4px;line-height:13.4px;color:#000;">Clr Peaks</div>
<div class="btn" style="left:964px;top:784.5px;width:69px;height:23.5px;"></div>
<div class="t" style="left:698.5px;width:600px;text-align:center;top:789.5px;font-size:13.4px;line-height:13.4px;color:#000;">Clr Harm.</div>
<div class="cb on" style="left:1054.3px;top:787.8px;width:16px;height:16px"><svg width="16" height="16" style="position:absolute;left:0;top:0"><path d="M2.8 8.6 L5.9 12.2 L13.3 4.2" stroke="#3b3a2c" stroke-width="2.1" fill="none" stroke-linejoin="round" stroke-linecap="round"/></svg></div>
<div class="t" style="left:1075.5px;top:789.8px;font-size:13px;line-height:13px;color:#000;">MaxFilter</div>
<div class="cb" style="left:1146.8px;top:787.8px;width:16px;height:16px"></div>
<div class="t" style="left:1168.0px;top:789.8px;font-size:13px;line-height:13px;color:#000;">Harm.</div>
<div class="cb" style="left:1220.8px;top:787.8px;width:16px;height:16px"></div>
<div class="t" style="left:1242.0px;top:789.8px;font-size:13px;line-height:13px;color:#000;">Magnify</div>
<div class="cb" style="left:1305.8px;top:787.8px;width:16px;height:16px"></div>
<div class="t" style="left:1327.0px;top:789.8px;font-size:13px;line-height:13px;color:#000;">Show Pk#</div>
<div class="cb" style="left:1402.8px;top:787.8px;width:16px;height:16px"></div>
<div class="t" style="left:1424.0px;top:789.8px;font-size:13px;line-height:13px;color:#000;">Zoom Y Axis</div>
<div class="cb on" style="left:1515.3px;top:787.8px;width:16px;height:16px"><svg width="16" height="16" style="position:absolute;left:0;top:0"><path d="M2.8 8.6 L5.9 12.2 L13.3 4.2" stroke="#3b3a2c" stroke-width="2.1" fill="none" stroke-linejoin="round" stroke-linecap="round"/></svg></div>
<div class="t" style="left:1536.5px;top:789.8px;font-size:13px;line-height:13px;color:#000;">kHz/MHz</div>
<div class="cb on" style="left:1771px;top:776.5px;width:16px;height:16px"><svg width="16" height="16" style="position:absolute;left:0;top:0"><path d="M2.8 8.6 L5.9 12.2 L13.3 4.2" stroke="#3b3a2c" stroke-width="2.1" fill="none" stroke-linejoin="round" stroke-linecap="round"/></svg></div>
<div class="t" style="left:1791.5px;top:777.8px;font-size:13.5px;line-height:13.5px;color:#000;">R</div>
<div class="b" style="left:1813px;top:93px;width:106px;height:724px;background:#dcdcdc;border-left:1px solid #a8a8a8"></div>
<div class="b" style="left:1814px;top:93px;width:103.5px;height:26px;border:1px solid #c4c4c4;border-top:none;border-radius:0 0 2px 2px;background:linear-gradient(#f2f2f2,#dedede);"></div>
<div class="t" style="left:1566px;width:600px;text-align:center;top:98.5px;font-size:13px;line-height:13px;color:#111;">Marker</div>
<div class="b" style="left:1814px;top:120px;width:103.5px;height:25px;border:1px solid #c4c4c4;border-radius:5px 5px 2px 2px;background:linear-gradient(#ececec,#cdcdcd);"></div>
<div class="t" style="left:1566px;width:600px;text-align:center;top:125.0px;font-size:13px;line-height:13px;color:#111;">Fader</div>
<div class="b" style="left:1814px;top:147px;width:103.5px;height:25px;border:1px solid #c4c4c4;border-radius:5px 5px 2px 2px;background:linear-gradient(#ececec,#cdcdcd);"></div>
<div class="t" style="left:1566px;width:600px;text-align:center;top:152.0px;font-size:13px;line-height:13px;color:#111;">Math</div>
<div class="b" style="left:1814px;top:174px;width:103.5px;height:25px;border:1px solid #c4c4c4;border-radius:5px 5px 2px 2px;background:linear-gradient(#ececec,#cdcdcd);"></div>
<div class="t" style="left:1566px;width:600px;text-align:center;top:179.0px;font-size:13px;line-height:13px;color:#111;">Labels</div>
<div class="b" style="left:1814px;top:201px;width:103.5px;height:25px;border:1px solid #c4c4c4;border-radius:5px 5px 2px 2px;background:linear-gradient(#ececec,#cdcdcd);"></div>
<div class="t" style="left:1566px;width:600px;text-align:center;top:206.0px;font-size:13px;line-height:13px;color:#111;">EN 61000</div>
<div class="b" style="left:1814px;top:226px;width:105px;height:1px;background:#c8c8c8"></div>
<div class="b" style="left:1818px;top:231.5px;width:80.5px;height:361.0px;border:2px solid #3fd43f;box-shadow:0 0 1px #9f9"></div>
<div class="t" style="left:1829.5px;top:235.8px;font-size:13.5px;line-height:13.5px;color:#111;font-weight:700;">Marker</div>
<div class="cb" style="left:1831.5px;top:260.5px;width:16px;height:16px"></div>
<div class="t" style="left:1852.5px;top:262.0px;font-size:13px;line-height:13px;color:#000;">M#</div>
<div class="cb on" style="left:1831.5px;top:288.5px;width:16px;height:16px"><svg width="16" height="16" style="position:absolute;left:0;top:0"><path d="M2.8 8.6 L5.9 12.2 L13.3 4.2" stroke="#3b3a2c" stroke-width="2.1" fill="none" stroke-linejoin="round" stroke-linecap="round"/></svg></div>
<div class="t" style="left:1852.5px;top:290.0px;font-size:13px;line-height:13px;color:#000;">show</div>
<div class="btn" style="left:1829px;top:310px;width:61px;height:41px;"></div>
<div class="t" style="left:1559.5px;width:600px;text-align:center;top:316.0px;font-size:13px;line-height:13px;color:#000;">Clear</div>
<div class="t" style="left:1559.5px;width:600px;text-align:center;top:332.0px;font-size:13px;line-height:13px;color:#000;">Last</div>
<div class="btn" style="left:1829px;top:356px;width:61px;height:28.5px;"></div>
<div class="t" style="left:1559.5px;width:600px;text-align:center;top:363.8px;font-size:13px;line-height:13px;color:#000;">Clear All</div>
<div class="btn" style="left:1829px;top:397px;width:61px;height:43px;"></div>
<div class="t" style="left:1559.5px;width:600px;text-align:center;top:404.0px;font-size:13px;line-height:13px;color:#000;">Copy</div>
<div class="t" style="left:1559.5px;width:600px;text-align:center;top:420.0px;font-size:13px;line-height:13px;color:#000;">Markers</div>
<div class="t" style="left:1828.5px;top:460.8px;font-size:13.5px;line-height:13.5px;color:#111;font-weight:700;">Δ Marker</div>
<div class="cb" style="left:1831.5px;top:481.5px;width:16px;height:16px"></div>
<div class="t" style="left:1852px;top:482.5px;font-size:13px;line-height:13px;color:#000;">Mkr A</div>
<div class="cb" style="left:1831.5px;top:504px;width:16px;height:16px"></div>
<div class="t" style="left:1852px;top:505.0px;font-size:13px;line-height:13px;color:#000;">Mkr B</div>
<div class="btn" style="left:1829px;top:547px;width:61px;height:41px;"></div>
<div class="t" style="left:1559.5px;width:600px;text-align:center;top:553.0px;font-size:13px;line-height:13px;color:#000;">Clear</div>
<div class="t" style="left:1559.5px;width:600px;text-align:center;top:569.0px;font-size:13px;line-height:13px;color:#000;">ΔMrk</div>
<div class="b" style="left:0px;top:816px;width:1919px;height:148px;background:#dddddd;border-top:1px solid #8f8f8f"></div>
<div class="b" style="left:0px;top:817px;width:1919px;height:1px;background:#f2f2f2"></div>
<div class="b" style="left:0px;top:818px;width:5px;height:146px;background:#e4e4e4;border-right:1px solid #c9c9c9"></div>
<div class="grp" style="left:7.5px;top:839px;width:389.5px;height:123px"></div>
<div class="t" style="left:18.5px;top:830.8px;font-size:13.5px;line-height:13.5px;color:#000;background:#dddddd;padding:0 1px;margin-left:-1px;">Messages</div>
<div class="cb" style="left:316.5px;top:829.5px;width:16px;height:16px"></div>
<div class="t" style="left:337.5px;top:830.8px;font-size:13.5px;line-height:13.5px;color:#000;background:#dddddd;padding-right:3px">Beep</div>
<div class="b" style="left:10px;top:850px;width:377.5px;height:100.5px;background:#fff;border:1px solid #8d8d8d"></div>
<div class="t" style="left:12px;top:854.7px;font-size:12.6px;line-height:12.6px;color:#111;">Info: monitor w/h: 1920/1080</div>
<div class="t" style="left:12px;top:870.7px;font-size:12.6px;line-height:12.6px;color:#1e1e70;">Info: play 05:42:11</div>
<div class="t" style="left:12px;top:886.7px;font-size:12.6px;line-height:12.6px;color:#a33434;letter-spacing:0.35px;">Error: no device selected</div>
<div class="grp" style="left:398px;top:839px;width:407px;height:123px"></div>
<div class="t" style="left:408px;top:830.8px;font-size:13.5px;line-height:13.5px;color:#000;background:#dddddd;padding:0 1px;margin-left:-1px;">Peaks Set1</div>
<div class="b" style="left:406px;top:853.5px;width:389.5px;height:98.5px;background:#fff;border:1px solid #8d8d8d"></div>
<div class="b" style="left:610px;top:827px;width:38px;height:25px;background:#dddddd"></div>
<div class="btn" style="left:617px;top:828.5px;width:21px;height:9px;border-radius:2px"></div>
<div class="btn" style="left:617px;top:839.5px;width:21px;height:10px;border-radius:2px"></div>
<svg class="b" style="left:617px;top:828px" width="22" height="23"><path d="M6.5 7 L11 2.5 L15.5 7 Z" fill="#000"/><path d="M6.5 14 L11 18.5 L15.5 14 Z" fill="#000"/></svg>
<div class="cb" style="left:650.5px;top:829.5px;width:16px;height:16px"></div>
<div class="t" style="left:671.5px;top:830.8px;font-size:13.4px;line-height:13.4px;color:#000;background:#dddddd;padding-right:3px">Select 6 maxpeaks</div>
<div class="grp" style="left:808px;top:839px;width:409px;height:123px"></div>
<div class="t" style="left:818px;top:830.8px;font-size:13.5px;line-height:13.5px;color:#000;background:#dddddd;padding:0 1px;margin-left:-1px;">Peaks Measurements Set1</div>
<div class="b" style="left:815px;top:851.5px;width:389px;height:99.5px;background:#fff;border:1px solid #8d8d8d"></div>
<div class="grp" style="left:1529.5px;top:839px;width:277.0px;height:122.5px"></div>
<div class="t" style="left:1540px;top:830.9px;font-size:13.2px;line-height:13.2px;color:#000;background:#dddddd;padding:0 1px;margin-left:-1px;">View (on/off)</div>
<div class="b" style="left:1535.5px;top:846px;width:12.0px;height:12px;background:#22ee22;border:1px solid #222"></div>
<div class="cb on" style="left:1559.5px;top:844px;width:16px;height:16px"><svg width="16" height="16" style="position:absolute;left:0;top:0"><path d="M2.8 8.6 L5.9 12.2 L13.3 4.2" stroke="#3b3a2c" stroke-width="2.1" fill="none" stroke-linejoin="round" stroke-linecap="round"/></svg></div>
<div class="t" style="left:1580.5px;top:845.2px;font-size:13.5px;line-height:13.5px;color:#111;">Set1</div>
<div class="b" style="left:1535.5px;top:866px;width:12.0px;height:12px;background:#ee22ee;border:1px solid #222"></div>
<div class="cb on" style="left:1559.5px;top:864px;width:16px;height:16px"><svg width="16" height="16" style="position:absolute;left:0;top:0"><path d="M2.8 8.6 L5.9 12.2 L13.3 4.2" stroke="#3b3a2c" stroke-width="2.1" fill="none" stroke-linejoin="round" stroke-linecap="round"/></svg></div>
<div class="t" style="left:1580.5px;top:865.2px;font-size:13.5px;line-height:13.5px;color:#111;">Set2</div>
<div class="b" style="left:1535.5px;top:886px;width:12.0px;height:12px;background:#808080;border:1px solid #222"></div>
<div class="cb on" style="left:1559.5px;top:884px;width:16px;height:16px"><svg width="16" height="16" style="position:absolute;left:0;top:0"><path d="M2.8 8.6 L5.9 12.2 L13.3 4.2" stroke="#3b3a2c" stroke-width="2.1" fill="none" stroke-linejoin="round" stroke-linecap="round"/></svg></div>
<div class="t" style="left:1580.5px;top:885.2px;font-size:13.5px;line-height:13.5px;color:#111;">Raw1</div>
<div class="b" style="left:1535.5px;top:906px;width:12.0px;height:12px;background:#c0c0c0;border:1px solid #222"></div>
<div class="cb on" style="left:1559.5px;top:904px;width:16px;height:16px"><svg width="16" height="16" style="position:absolute;left:0;top:0"><path d="M2.8 8.6 L5.9 12.2 L13.3 4.2" stroke="#3b3a2c" stroke-width="2.1" fill="none" stroke-linejoin="round" stroke-linecap="round"/></svg></div>
<div class="t" style="left:1580.5px;top:905.2px;font-size:13.5px;line-height:13.5px;color:#111;">Raw2</div>
<div class="cb" style="left:1559.5px;top:924px;width:16px;height:16px"></div>
<div class="t" style="left:1580.5px;top:925.2px;font-size:13.5px;line-height:13.5px;color:#111;">Cor</div>
<div class="b" style="left:1628px;top:846px;width:12px;height:12px;background:#137a13;border:1px solid #222"></div>
<div class="cb on" style="left:1652px;top:844px;width:16px;height:16px"><svg width="16" height="16" style="position:absolute;left:0;top:0"><path d="M2.8 8.6 L5.9 12.2 L13.3 4.2" stroke="#3b3a2c" stroke-width="2.1" fill="none" stroke-linejoin="round" stroke-linecap="round"/></svg></div>
<div class="t" style="left:1673px;top:845.2px;font-size:13.5px;line-height:13.5px;color:#111;">T1S1</div>
<div class="b" style="left:1628px;top:866px;width:12px;height:12px;background:#720a7a;border:1px solid #222"></div>
<div class="cb on" style="left:1652px;top:864px;width:16px;height:16px"><svg width="16" height="16" style="position:absolute;left:0;top:0"><path d="M2.8 8.6 L5.9 12.2 L13.3 4.2" stroke="#3b3a2c" stroke-width="2.1" fill="none" stroke-linejoin="round" stroke-linecap="round"/></svg></div>
<div class="t" style="left:1673px;top:865.2px;font-size:13.5px;line-height:13.5px;color:#111;">T1S2</div>
<div class="b" style="left:1628px;top:886px;width:12px;height:12px;background:#ee1111;border:1px solid #222"></div>
<div class="cb on" style="left:1652px;top:884px;width:16px;height:16px"><svg width="16" height="16" style="position:absolute;left:0;top:0"><path d="M2.8 8.6 L5.9 12.2 L13.3 4.2" stroke="#3b3a2c" stroke-width="2.1" fill="none" stroke-linejoin="round" stroke-linecap="round"/></svg></div>
<div class="t" style="left:1673px;top:885.2px;font-size:13.5px;line-height:13.5px;color:#111;">Marg1</div>
<div class="b" style="left:1628px;top:906px;width:12px;height:12px;background:#1111dd;border:1px solid #222"></div>
<div class="cb on" style="left:1652px;top:904px;width:16px;height:16px"><svg width="16" height="16" style="position:absolute;left:0;top:0"><path d="M2.8 8.6 L5.9 12.2 L13.3 4.2" stroke="#3b3a2c" stroke-width="2.1" fill="none" stroke-linejoin="round" stroke-linecap="round"/></svg></div>
<div class="t" style="left:1673px;top:905.2px;font-size:13.5px;line-height:13.5px;color:#111;">Marg2</div>
<div class="cb" style="left:1652px;top:924px;width:16px;height:16px"></div>
<div class="t" style="left:1673px;top:925.2px;font-size:13.5px;line-height:13.5px;color:#111;">Segm.</div>
<div class="b" style="left:1718px;top:846px;width:12px;height:12px;background:#a9c9ee;border:1px solid #222"></div>
<div class="cb on" style="left:1742px;top:844px;width:16px;height:16px"><svg width="16" height="16" style="position:absolute;left:0;top:0"><path d="M2.8 8.6 L5.9 12.2 L13.3 4.2" stroke="#3b3a2c" stroke-width="2.1" fill="none" stroke-linejoin="round" stroke-linecap="round"/></svg></div>
<div class="t" style="left:1763px;top:845.2px;font-size:13.5px;line-height:13.5px;color:#111;">T2S1</div>
<div class="b" style="left:1718px;top:866px;width:12px;height:12px;background:#0f7a7a;border:1px solid #222"></div>
<div class="cb on" style="left:1742px;top:864px;width:16px;height:16px"><svg width="16" height="16" style="position:absolute;left:0;top:0"><path d="M2.8 8.6 L5.9 12.2 L13.3 4.2" stroke="#3b3a2c" stroke-width="2.1" fill="none" stroke-linejoin="round" stroke-linecap="round"/></svg></div>
<div class="t" style="left:1763px;top:865.2px;font-size:13.5px;line-height:13.5px;color:#111;">T2S2</div>
<div class="b" style="left:1718px;top:886px;width:12px;height:12px;background:#0a0a80;border:1px solid #222"></div>
<div class="cb on" style="left:1742px;top:884px;width:16px;height:16px"><svg width="16" height="16" style="position:absolute;left:0;top:0"><path d="M2.8 8.6 L5.9 12.2 L13.3 4.2" stroke="#3b3a2c" stroke-width="2.1" fill="none" stroke-linejoin="round" stroke-linecap="round"/></svg></div>
<div class="t" style="left:1763px;top:885.2px;font-size:13.5px;line-height:13.5px;color:#111;">T3S1</div>
<div class="b" style="left:1718px;top:906px;width:12px;height:12px;background:#c8dcc8;border:1px solid #222"></div>
<div class="cb on" style="left:1742px;top:904px;width:16px;height:16px"><svg width="16" height="16" style="position:absolute;left:0;top:0"><path d="M2.8 8.6 L5.9 12.2 L13.3 4.2" stroke="#3b3a2c" stroke-width="2.1" fill="none" stroke-linejoin="round" stroke-linecap="round"/></svg></div>
<div class="t" style="left:1763px;top:905.2px;font-size:13.5px;line-height:13.5px;color:#111;">T3S2</div>
<div class="b" style="left:1718px;top:926px;width:12px;height:12px;background:#ee1111;border:1px solid #222"></div>
<div class="cb" style="left:1742px;top:924px;width:16px;height:16px"></div>
<div class="t" style="left:1763px;top:925.2px;font-size:13.5px;line-height:13.5px;color:#111;">Math</div>
<div class="grp" style="left:1808px;top:839.5px;width:109px;height:122.0px"></div>
<div class="t" style="left:1818px;top:831.2px;font-size:13.5px;line-height:13.5px;color:#000;background:#dddddd;padding:0 1px;margin-left:-1px;">Segm. (on/off)</div>
<div class="b" style="left:1821.5px;top:853.5px;width:72.5px;height:97.0px;background:#fff;border:1px solid #8d8d8d"></div>
<div class="cb dis" style="left:1829px;top:857px;width:16px;height:16px"></div>
<div class="t" style="left:1855px;top:858.0px;font-size:13px;line-height:13px;color:#9a9a9a;">all</div>
<div class="b" style="left:148.5px;top:23px;width:179px;height:101px;background:linear-gradient(#ffffff,#f1f1f1);border:1px solid #a8a8a8;box-shadow:3px 3px 3px rgba(0,0,0,0.35)"></div>
<div class="b" style="left:150px;top:95px;width:172px;height:24.5px;background:linear-gradient(#f6e39c,#eed07a);border:1px solid #e3c370"></div>
<svg class="b" style="left:157px;top:29px" width="18" height="16"><path d="M3 7.8 L6.6 11.6 L14 4" stroke="#111" stroke-width="2.6" fill="none"/></svg>
<div class="t" style="left:188px;top:29.9px;font-size:14.2px;line-height:14.2px;color:#141414;">EMC</div>
<div class="b" style="left:188px;top:44.0px;width:9px;height:1px;background:#222"></div>
<div class="t" style="left:188px;top:53.2px;font-size:14.2px;line-height:14.2px;color:#141414;">RF Coverage</div>
<div class="b" style="left:188px;top:67.3px;width:9px;height:1px;background:#222"></div>
<div class="t" style="left:188px;top:76.9px;font-size:14.2px;line-height:14.2px;color:#141414;">Generator</div>
<div class="b" style="left:188px;top:91.0px;width:10px;height:1px;background:#222"></div>
<div class="t" style="left:188px;top:100.4px;font-size:14.2px;line-height:14.2px;color:#141414;">Tools</div>
<div class="b" style="left:188px;top:114.5px;width:7.5px;height:1px;background:#222"></div>
<svg class="b" style="left:311px;top:102px" width="8" height="11"><path d="M1.5 1 L6.5 5.5 L1.5 10 Z" fill="#111"/></svg>
<div class="b" style="left:322px;top:94.5px;width:146px;height:54px;background:linear-gradient(#ffffff,#f0f0f0);border:1px solid #a8a8a8;box-shadow:3px 3px 3px rgba(0,0,0,0.35)"></div>
<div class="t" style="left:361px;top:101.2px;font-size:14.6px;line-height:14.6px;color:#141414;">dBCalc</div>
<div class="b" style="left:361px;top:115.5px;width:8px;height:1px;background:#222"></div>
<div class="t" style="left:361px;top:124.2px;font-size:14.6px;line-height:14.6px;color:#141414;">AntCalc</div>
<div class="b" style="left:361px;top:138.5px;width:9px;height:1px;background:#222"></div>
</body></html>
